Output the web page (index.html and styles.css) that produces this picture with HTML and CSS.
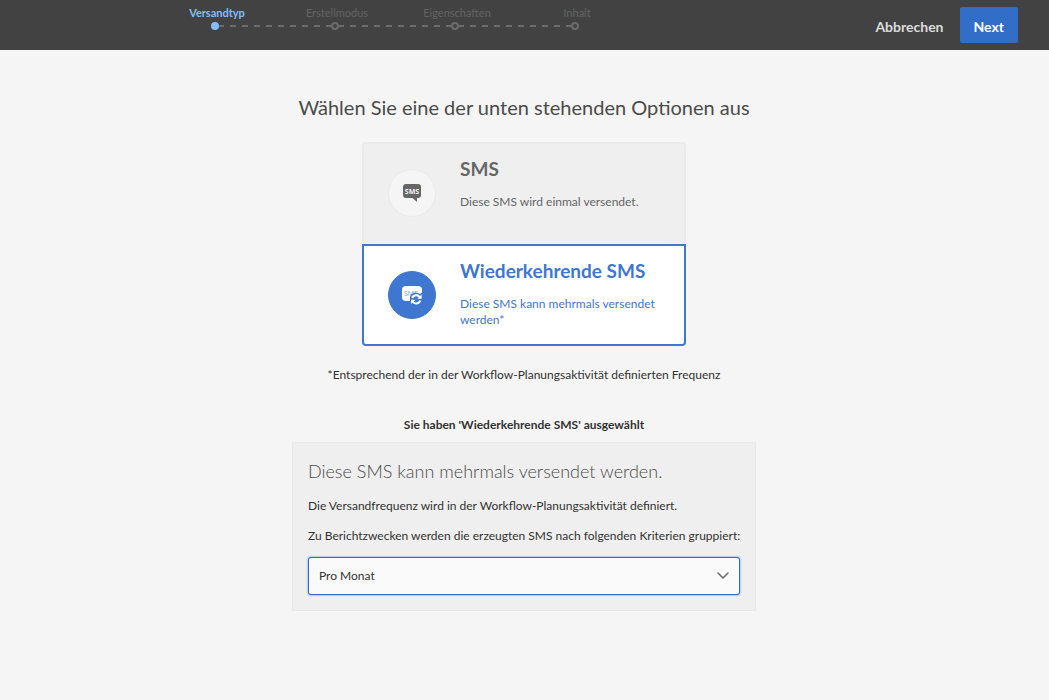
FILE: index.html
```html
<!DOCTYPE html>
<html lang="de">
<head>
<meta charset="utf-8">
<title>Versandtyp</title>
<link rel="stylesheet" href="styles.css">
</head>
<body>
<header class="topbar">
  <ol class="steps">
    <li class="step step-active" aria-current="step"><span class="step-label">Versandtyp</span><span class="step-track"><span class="step-dot"></span></span></li>
    <li class="step"><span class="step-label">Erstellmodus</span><span class="step-track"><span class="step-dot"></span></span></li>
    <li class="step"><span class="step-label">Eigenschaften</span><span class="step-track"><span class="step-dot"></span></span></li>
    <li class="step"><span class="step-label">Inhalt</span><span class="step-track"><span class="step-dot"></span></span></li>
  </ol>
  <div class="actions">
    <button type="button" class="btn btn-quiet">Abbrechen</button>
    <button type="button" class="btn btn-primary">Next</button>
  </div>
</header>
<main class="content">
  <h1 class="title">Wählen Sie eine der unten stehenden Optionen aus</h1>
  <div class="options" role="radiogroup" aria-label="Versandtyp">
    <label class="option">
      <input class="option-input" type="radio" name="type" value="sms">
      <span class="option-icon">
        <svg width="18" height="18" viewBox="0 0 18 18" aria-hidden="true">
          <path fill="#666" d="M3 0h12a3 3 0 0 1 3 3v8a3 3 0 0 1-3 3h-1v4l-4.500-4H3a3 3 0 0 1-3-3V3a3 3 0 0 1 3-3z"/>
          <text class="icon-text" x="9" y="10" fill="#f5f5f5">SMS</text>
        </svg>
      </span>
      <span class="option-text">
        <span class="option-title">SMS</span>
        <span class="option-desc">Diese SMS wird einmal versendet.</span>
      </span>
    </label>
    <label class="option option-selected">
      <input class="option-input" type="radio" name="type" value="recurring" checked>
      <span class="option-icon">
        <svg width="20" height="20" viewBox="0 0 20 20" aria-hidden="true">
          <rect width="20" height="15" y="1" rx="4" fill="#fff"/>
          <text class="icon-text icon-text-thin" x="9" y="11" fill="#6f9ade">SMS</text>
          <path fill="#3f76cf" d="M8 15.500V11.500a6.300 6.300 0 0 1 10-2.500l2-1.500V20H8z"/>
          <path fill="none" stroke="#fff" stroke-width="2" d="M10.200 13a4.200 4.200 0 0 1 7.600-.8M18.200 15.500a4.200 4.200 0 0 1-7.600 1"/>
          <path fill="#fff" d="M19.700 9.500v4.200h-4.500zM9 19v-4.200h4.500z"/>
        </svg>
      </span>
      <span class="option-text">
        <span class="option-title">Wiederkehrende SMS</span>
        <span class="option-desc">Diese SMS kann mehrmals versendet werden*</span>
      </span>
    </label>
  </div>
  <p class="footnote">*Entsprechend der in der Workflow-Planungsaktivität definierten Frequenz</p>
  <h2 class="selected-note">Sie haben 'Wiederkehrende SMS' ausgewählt</h2>
  <section class="panel">
    <h3 class="panel-title">Diese SMS kann mehrmals versendet werden.</h3>
    <p class="panel-text">Die Versandfrequenz wird in der Workflow-Planungsaktivität definiert.</p>
    <label class="panel-label" for="period">Zu Berichtzwecken werden die erzeugten SMS nach folgenden Kriterien gruppiert:</label>
    <div class="select-box">
      <select id="period" class="select">
        <option>Pro Monat</option>
      </select>
      <svg class="select-arrow" width="12" height="8" viewBox="0 0 12 8" aria-hidden="true"><path d="M1 1l5 5 5-5" fill="none" stroke="#6e6e6e" stroke-width="1.600" stroke-linecap="round" stroke-linejoin="round"/></svg>
    </div>
  </section>
</main>
</body>
</html>
```
FILE: styles.css
```css
* { box-sizing: border-box; }
body {
  margin: 0;
  background: #f5f5f5;
  color: #323232;
  font: 12px/16px Lato, "Open Sans", sans-serif;
}
h1, h2, h3, p, ol { margin: 0; padding: 0; }

.topbar {
  display: flex;
  justify-content: space-between;
  align-items: flex-start;
  min-height: 50px;
  padding: 6px 31px 0 155px;
  background: #424242;
}
.steps { display: flex; list-style: none; }
.step {
  display: flex;
  flex-direction: column;
  width: 120px;
  color: #636363;
  font-size: 11px;
  line-height: 14px;
  text-align: center;
}
.step-label { padding-left: 4px; }
.step-active { color: #83bcff; font-weight: bold; }
.step-track {
  display: flex;
  align-items: center;
  height: 12px;
  padding-left: 56px;
}
.step-track::after {
  content: "";
  flex: 1;
  height: 2px;
  margin-right: -56px;
  background: repeating-linear-gradient(90deg, #6b6b6b 0 5px, transparent 5px 11px, #6b6b6b 11px 12px);
}
.step:last-child .step-track::after { display: none; }
.step-dot {
  width: 8px;
  height: 8px;
  border: 2px solid #6b6b6b;
  border-radius: 50%;
}
.step-active .step-dot { border-color: #83bcff; background: #83bcff; }

.actions { display: flex; gap: 16px; padding-top: 1px; }
.btn {
  height: 36px;
  padding: 4px 0 0;
  border: 0;
  border-radius: 2px;
  background: transparent;
  color: #dcdcdc;
  font: bold 14px/20px Lato, "Open Sans", sans-serif;
}
.btn-primary { padding: 4px 14px 0; background: #326ec8; color: #fff; }

.content {
  display: flex;
  flex-direction: column;
  align-items: center;
  padding: 43px 1px 0 0;
}
.title {
  color: #4b4b4b;
  font-size: 20px;
  font-weight: normal;
  line-height: 28px;
}
.options { width: 324px; margin-top: 21px; }
.option {
  display: flex;
  gap: 24px;
  min-height: 102px;
  padding: 13px 24px 15px;
  border: 2px solid #eaeaea;
  border-bottom: 0;
  border-radius: 4px 4px 0 0;
  background: #efefef;
  color: #666;
}
.option-selected {
  padding-bottom: 13px;
  border: 2px solid #3f76cf;
  border-radius: 0 0 4px 4px;
  background: #fff;
  color: #3f76cf;
}
.option-input { position: absolute; opacity: 0; }
.option-icon {
  display: flex;
  flex: none;
  align-items: center;
  justify-content: center;
  align-self: center;
  width: 48px;
  height: 48px;
  border: 1px solid #eaeaea;
  border-radius: 50%;
  background: #f5f5f5;
}
.option-selected .option-icon { border-color: #3f76cf; background: #3f76cf; }
.icon-text { font: bold 7px "Open Sans", sans-serif; text-anchor: middle; }
.icon-text-thin { font-weight: normal; }
.option-text { display: flex; flex-direction: column; gap: 13px; }
.option-title { font-size: 19px; font-weight: bold; line-height: 24px; }

.footnote { margin-top: 21px; }
.selected-note { margin-top: 34px; font-size: 12px; line-height: 16px; }

.panel {
  display: flex;
  flex-direction: column;
  width: 464px;
  max-width: 100%;
  margin-top: 9px;
  padding: 14px 15px 15px;
  border: 1px solid #e8e8e8;
  background: #efefef;
}
.panel-title {
  margin-bottom: 13px;
  color: #4b4b4b;
  font-size: 18px;
  font-weight: 300;
  line-height: 28px;
}
.panel-text { margin-bottom: 14px; }
.panel-label { margin-bottom: 13px; white-space: nowrap; }
.select-box { display: grid; align-items: center; }
.select {
  grid-area: 1 / 1;
  width: 100%;
  height: 38px;
  padding: 0 10px;
  border: 1px solid #326ec8;
  border-radius: 3px;
  box-shadow: 0 0 2px #326ec8;
  background: #fafafa;
  color: #323232;
  font: 12px/16px Lato, "Open Sans", sans-serif;
  appearance: none;
}
.select-arrow {
  grid-area: 1 / 1;
  justify-self: end;
  margin-right: 11px;
  pointer-events: none;
}
```
